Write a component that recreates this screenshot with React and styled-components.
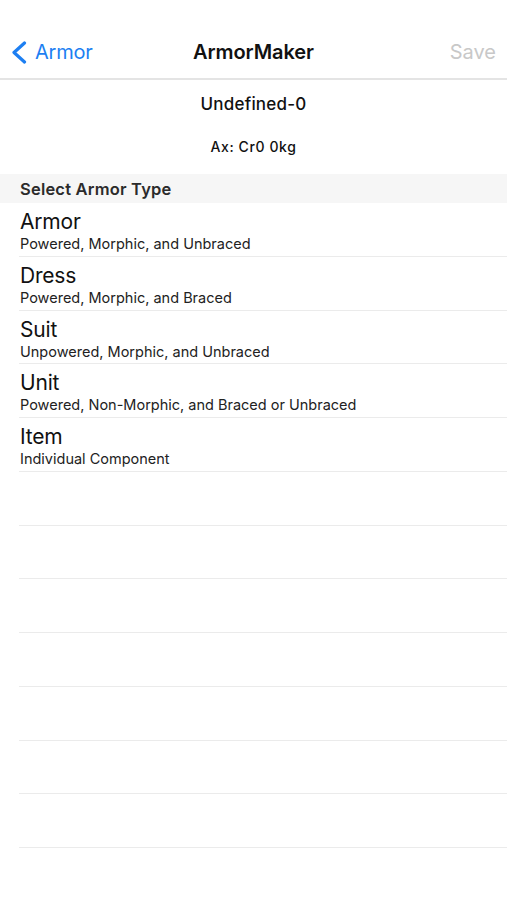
import React from "react";
import styled, { createGlobalStyle } from "styled-components";

const Global = createGlobalStyle`
  html, body { margin: 0; padding: 0; background: #fff; }
  body { font-family: Inter, "Open Sans", "Liberation Sans", sans-serif; -webkit-font-smoothing: antialiased; }
`;

const Screen = styled.div`
  width: 507px;
  height: 900px;
  background: #fff;
  display: flex;
  flex-direction: column;
  overflow: hidden;
`;

const NavBar = styled.div`
  height: 80px;
  flex-shrink: 0;
  box-sizing: border-box;
  padding-top: 26px;
  display: grid;
  grid-template-columns: 1fr auto 1fr;
  align-items: center;
  border-bottom: 2px solid #e4e4e4;
`;

const BackButton = styled.div`
  display: flex;
  align-items: center;
  gap: 8px;
  padding-left: 11px;
  color: #1d7ff2;
  font-size: 20px;
  letter-spacing: -0.2px;
`;

const NavTitle = styled.div`
  font-size: 20px;
  font-weight: 600;
  color: #111;
  letter-spacing: -0.1px;
`;

const NavAction = styled.div`
  justify-self: end;
  padding-right: 11px;
  font-size: 20px;
  color: #c8c8c8;
`;

const InfoBlock = styled.div`
  display: flex;
  flex-direction: column;
  align-items: center;
  flex-shrink: 0;
`;

const InfoName = styled.div`
  margin-top: 12px;
  height: 24px;
  line-height: 24px;
  font-size: 17px;
  font-weight: 500;
  color: #111;
  letter-spacing: 0.2px;
`;

const InfoStats = styled.div`
  margin-top: 21px;
  height: 20px;
  line-height: 20px;
  font-size: 14px;
  font-weight: 500;
  color: #111;
  letter-spacing: 0.6px;
`;

const SectionHeader = styled.div`
  margin-top: 17px;
  height: 29px;
  flex-shrink: 0;
  background: #f6f6f6;
  padding-left: 20px;
  display: flex;
  align-items: center;
  font-size: 16.5px;
  font-weight: 600;
  color: #2b2b2b;
  letter-spacing: 0.2px;
`;

const List = styled.div`
  display: flex;
  flex-direction: column;
  padding-left: 19px;
`;

const Row = styled.div`
  height: 53.75px;
  flex-shrink: 0;
  box-sizing: border-box;
  border-bottom: 1.5px solid #ebebeb;
  display: flex;
  flex-direction: column;
  padding-top: 8px;
  padding-left: 1px;
`;

const RowTitle = styled.div`
  font-size: 21px;
  line-height: 22px;
  color: #111;
  letter-spacing: -0.2px;
`;

const RowSubtitle = styled.div`
  margin-top: 1px;
  font-size: 14.5px;
  line-height: 19px;
  color: #222;
`;

const types = [
  ["Armor", "Powered, Morphic, and Unbraced"],
  ["Dress", "Powered, Morphic, and Braced"],
  ["Suit", "Unpowered, Morphic, and Unbraced"],
  ["Unit", "Powered, Non-Morphic, and Braced or Unbraced"],
  ["Item", "Individual Component"],
];

export default function App() {
  return (
    <Screen>
      <Global />
      <NavBar>
        <BackButton>
          <svg width="16" height="23" viewBox="0 0 16 23">
            <path d="M13.5 2 L3 11.5 L13.5 21" fill="none" stroke="#1d7ff2" strokeWidth="3.2" strokeLinecap="round" strokeLinejoin="round" />
          </svg>
          Armor
        </BackButton>
        <NavTitle>ArmorMaker</NavTitle>
        <NavAction>Save</NavAction>
      </NavBar>
      <InfoBlock>
        <InfoName>Undefined-0</InfoName>
        <InfoStats>Ax: Cr0 0kg</InfoStats>
      </InfoBlock>
      <SectionHeader>Select Armor Type</SectionHeader>
      <List>
        {types.map(([t, s]) => (
          <Row key={t}>
            <RowTitle>{t}</RowTitle>
            <RowSubtitle>{s}</RowSubtitle>
          </Row>
        ))}
        {Array.from({ length: 7 }).map((_, i) => (
          <Row key={"e" + i} />
        ))}
      </List>
    </Screen>
  );
}
